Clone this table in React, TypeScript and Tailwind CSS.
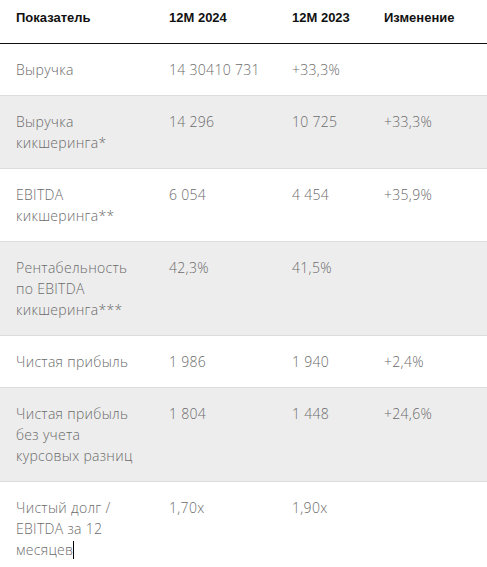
import React from "react";

type Row = {
  label: string[];
  y2024: string;
  y2023: string;
  change: string;
  shaded: boolean;
  caret?: boolean;
};

const rows: Row[] = [
  { label: ["Выручка"], y2024: "14 30410 731", y2023: "+33,3%", change: "", shaded: false },
  { label: ["Выручка", "кикшеринга*"], y2024: "14 296", y2023: "10 725", change: "+33,3%", shaded: true },
  { label: ["EBITDA", "кикшеринга**"], y2024: "6 054", y2023: "4 454", change: "+35,9%", shaded: false },
  { label: ["Рентабельность", "по EBITDA", "кикшеринга***"], y2024: "42,3%", y2023: "41,5%", change: "", shaded: true },
  { label: ["Чистая прибыль"], y2024: "1 986", y2023: "1 940", change: "+2,4%", shaded: false },
  { label: ["Чистая прибыль", "без учета", "курсовых разниц"], y2024: "1 804", y2023: "1 448", change: "+24,6%", shaded: true },
  { label: ["Чистый долг /", "EBITDA за 12", "месяцев"], y2024: "1,70x", y2023: "1,90x", change: "", shaded: false, caret: true },
];

const cols = "grid grid-cols-[153px_123px_92px_1fr] pl-4";

export default function App() {
  return (
    <div className="w-[487px] min-h-[567px] bg-white">
      <div
        className={`${cols} pt-[7px] pb-[15px] border-b border-[#111] text-[13px] leading-[21px] font-bold text-[#111]`}
        style={{ fontFamily: "'Liberation Sans', Arial, sans-serif" }}
      >
        <div>Показатель</div>
        <div>12M 2024</div>
        <div>12M 2023</div>
        <div>Изменение</div>
      </div>
      {rows.map((row, i) => (
        <div
          key={i}
          className={`${cols} pt-[15px] pb-[15px] text-[14px] leading-[21px] font-light tracking-[0.3px] text-[#6b6b6b] ${
            i > 0 ? "border-t border-[#dcdcdc]" : ""
          } ${row.shaded ? "bg-[#ededed]" : "bg-white"}`}
          style={{ fontFamily: "'Open Sans', sans-serif" }}
        >
          <div>
            {row.label.map((line, j) => (
              <div key={j} className="whitespace-nowrap">
                {line}
                {row.caret && j === row.label.length - 1 && (
                  <span className="inline-block w-px h-[18px] bg-black align-[-4px]" />
                )}
              </div>
            ))}
          </div>
          <div>{row.y2024}</div>
          <div>{row.y2023}</div>
          <div>{row.change}</div>
        </div>
      ))}
    </div>
  );
}
